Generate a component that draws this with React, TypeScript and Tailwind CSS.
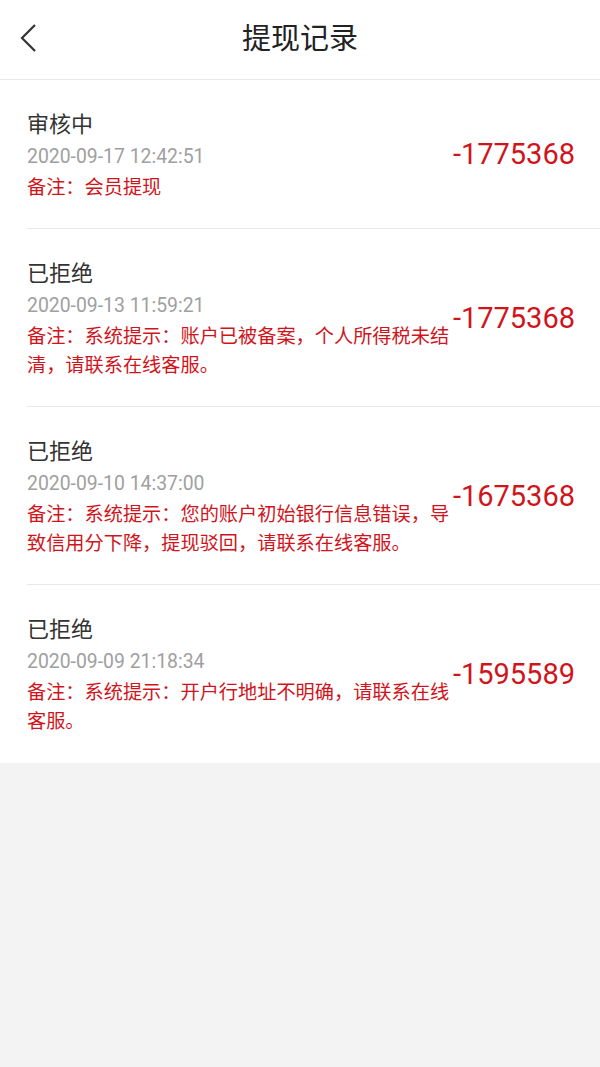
const records = [
  {
    status: "审核中",
    time: "2020-09-17 12:42:51",
    note: "备注：会员提现",
    amount: "-1775368",
  },
  {
    status: "已拒绝",
    time: "2020-09-13 11:59:21",
    note: "备注：系统提示：账户已被备案，个人所得税未结清，请联系在线客服。",
    amount: "-1775368",
  },
  {
    status: "已拒绝",
    time: "2020-09-10 14:37:00",
    note: "备注：系统提示：您的账户初始银行信息错误，导致信用分下降，提现驳回，请联系在线客服。",
    amount: "-1675368",
  },
  {
    status: "已拒绝",
    time: "2020-09-09 21:18:34",
    note: "备注：系统提示：开户行地址不明确，请联系在线客服。",
    amount: "-1595589",
  },
];

const font = "font-['Roboto','Noto_Sans_CJK_SC',sans-serif]";

export default function App() {
  return (
    <div className={`min-h-[1067px] w-[600px] bg-[#f3f3f3] ${font}`}>
      {/* Header */}
      <div className="relative flex h-[80px] items-center justify-center border-b border-[#e8e8e8] bg-white">
        <button className="absolute left-[14px] top-[18px] p-[4px]">
          <svg width="20" height="32" viewBox="0 0 20 32" fill="none">
            <path d="M17 3 L4 16 L17 29" stroke="#333" strokeWidth="2.2" strokeLinejoin="miter" />
          </svg>
        </button>
        <h1 className="text-[29px] leading-none text-[#222]">提现记录</h1>
      </div>

      {/* Records */}
      <div className="bg-white pb-[1px]">
        {records.map((r, i) => (
          <div
            key={i}
            className={`ml-[27px] flex items-center pb-[26px] pt-[28px] ${
              i < records.length - 1 ? "border-b border-[#e8e8e8]" : ""
            }`}
          >
            <div className="w-[424px] shrink-0">
              <p className="text-[22px] leading-[33px] text-[#333]">{r.status}</p>
              <p className="text-[19.4px] leading-[32px] text-[#a0a0a0]">{r.time}</p>
              <p className="text-[19.2px] leading-[29px] text-[#d0141c]">{r.note}</p>
            </div>
            <div className="flex-1 pr-[25px] text-right text-[29px] text-[#d0141c]">{r.amount}</div>
          </div>
        ))}
      </div>
    </div>
  );
}
